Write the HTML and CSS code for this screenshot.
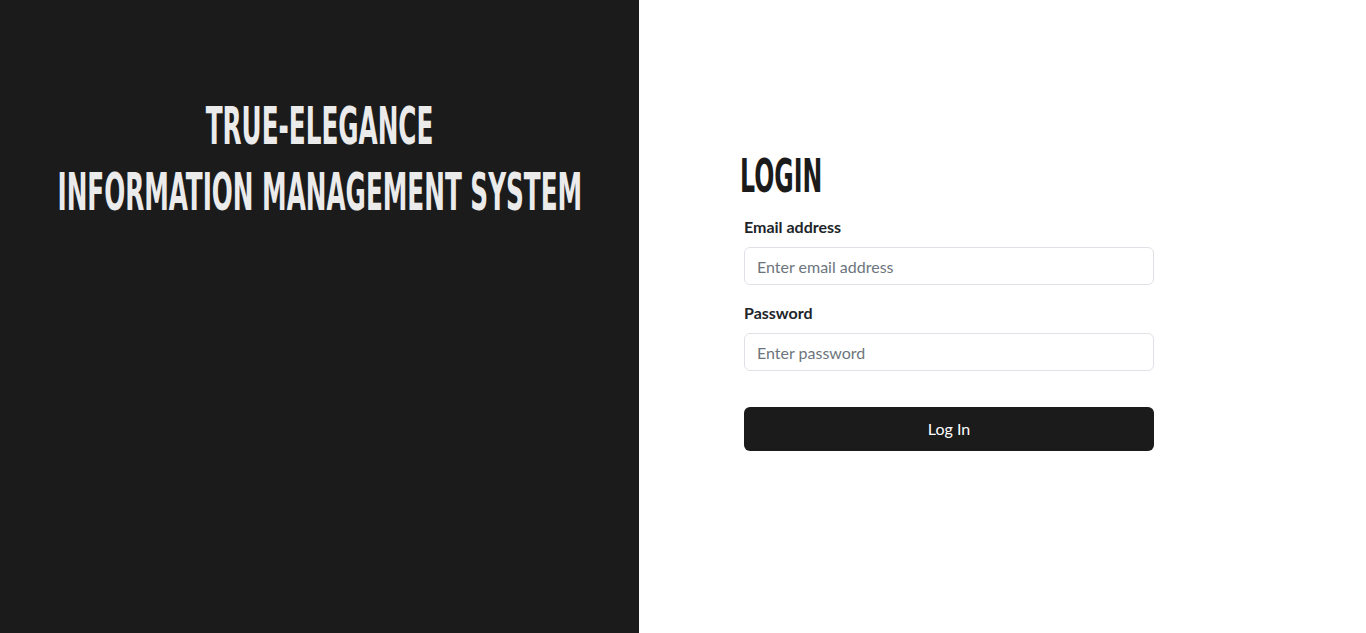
FILE: index.html
```html
<!DOCTYPE html>
<html lang="en">
<head>
<meta charset="utf-8">
<title>True-Elegance — Login</title>
<link rel="stylesheet" href="styles.css">
</head>
<body>
<main class="page">
  <section class="brand">
    <h1 class="brand-title">
      <span class="squeeze">TRUE-ELEGANCE</span>
      <span class="squeeze">INFORMATION MANAGEMENT SYSTEM</span>
    </h1>
  </section>
  <section class="auth">
    <div class="auth-inner">
      <h2 class="auth-title"><span class="squeeze squeeze-left">LOGIN</span></h2>
      <form class="form">
        <div class="field">
          <label class="label" for="email">Email address</label>
          <input class="input" id="email" type="email" placeholder="Enter email address">
        </div>
        <div class="field">
          <label class="label" for="password">Password</label>
          <input class="input" id="password" type="password" placeholder="Enter password">
        </div>
        <button class="btn" type="button">Log In</button>
      </form>
    </div>
  </section>
</main>
</body>
</html>
```
FILE: styles.css
```css
* { box-sizing: border-box; }
html, body { margin: 0; height: 100%; }
body {
  font-family: Lato, "Noto Sans", "Liberation Sans", sans-serif;
  font-size: 16px;
  line-height: 1.5;
  color: #212529;
  background: #ffffff;
}
.page {
  display: flex;
  height: 100vh;
}
.brand {
  flex: none;
  width: 639px;
  background: #1b1b1b;
  overflow: hidden;
}
.brand-title {
  margin: 0;
  padding-top: 93px;
  display: flex;
  flex-direction: column;
  align-items: center;
  color: #ebebeb;
  font-family: "DejaVu Sans Condensed", "DejaVu Sans", sans-serif;
  font-stretch: condensed;
  font-weight: 700;
  font-size: 52px;
  line-height: 66px;
  white-space: nowrap;
}
.squeeze {
  display: inline-block;
  transform: scaleX(0.528);
}
.squeeze-left {
  transform-origin: left center;
  transform: scaleX(0.56);
}
.auth {
  flex: 1;
  padding: 148px 0 0 101px;
}
.auth-inner { width: 414px; }
.auth-title {
  margin: 0 0 11px;
  font-family: "DejaVu Sans Condensed", "DejaVu Sans", sans-serif;
  font-stretch: condensed;
  font-weight: 700;
  font-size: 47px;
  line-height: 56px;
  color: #1b1b1b;
  white-space: nowrap;
}
.form {
  margin-left: 4px;
  width: 410px;
  display: flex;
  flex-direction: column;
}
.field {
  display: flex;
  flex-direction: column;
  margin-bottom: 16px;
}
.label {
  font-weight: 700;
  margin-bottom: 8px;
}
.input {
  height: 38px;
  padding: 6px 12px;
  border: 1px solid #dee2e6;
  border-radius: 6px;
  font: inherit;
  color: #212529;
  background: #fff;
}
.input::placeholder { color: #6c757d; opacity: 1; }
.btn {
  margin-top: 20px;
  height: 44px;
  border: 0;
  border-radius: 6px;
  background: #1b1b1b;
  color: #ffffff;
  font: inherit;
  cursor: pointer;
}
```
